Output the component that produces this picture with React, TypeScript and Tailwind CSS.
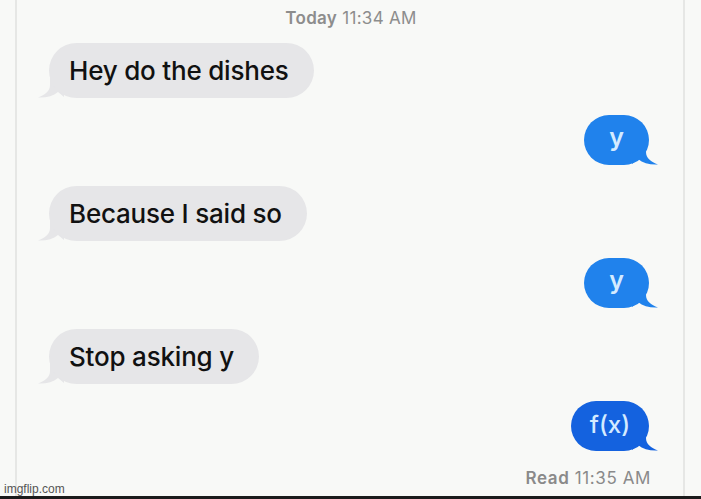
import React from "react";

type Msg = { from: "them" | "me"; text: string; dark?: boolean };

const messages: Msg[] = [
  { from: "them", text: "Hey do the dishes" },
  { from: "me", text: "y" },
  { from: "them", text: "Because I said so" },
  { from: "me", text: "y" },
  { from: "them", text: "Stop asking y" },
  { from: "me", text: "f(x)", dark: true },
];

function Tail({ color, flip }: { color: string; flip?: boolean }) {
  return (
    <svg
      width="26"
      height="22"
      viewBox="0 0 26 22"
      className={
        flip
          ? "absolute -right-[9px] bottom-0 -scale-x-100"
          : "absolute -left-[11px] bottom-0"
      }
    >
      <path
        d="M12 0 L12 9 C12 15 7 19 0 21.5 C8 22 15 20 20 16 L26 21 L26 0 Z"
        fill={color}
      />
    </svg>
  );
}

function Bubble({ msg, first }: { msg: Msg; first: boolean }) {
  if (msg.from === "them") {
    return (
      <div className={first ? "flex justify-start pl-[32px]" : "flex justify-start pl-[32px] mt-[21px]"}>
        <div className="relative">
          <Tail color="#e6e6e8" />
          <div className="relative h-[55px] rounded-[28px] bg-[#e6e6e8] pl-[20px] pr-[25px] flex items-center text-[26px] font-medium text-[#111] tracking-[-0.2px]">
            {msg.text}
          </div>
        </div>
      </div>
    );
  }
  const bg = msg.dark ? "#1462df" : "#2082ec";
  return (
    <div className="flex justify-end pr-[34px] mt-[17px]">
      <div className="relative">
        <Tail color={bg} flip />
        <div
          className={
            msg.dark
              ? "relative h-[50px] rounded-[25px] bg-[#1462df] px-[19px] flex items-center text-[24px] font-medium text-[#d4ebff] pb-[2px]"
              : "relative h-[50px] w-[65px] rounded-[25px] bg-[#2082ec] flex items-center justify-center text-[25px] font-semibold text-[#d4ebff] pb-[4px]"
          }
        >
          {msg.text}
        </div>
      </div>
    </div>
  );
}

export default function App() {
  return (
    <div
      className="relative w-[701px] h-[499px] bg-[#f8f9f7] flex flex-col overflow-hidden"
      style={{ fontFamily: "Inter, 'Liberation Sans', sans-serif" }}
    >
      <div className="flex-1 ml-[15px] w-[670px] border-x-2 border-[#e6e7e5] flex flex-col pt-[7px]">
        <div className="text-center text-[17px] text-[#8d8d8d] leading-[22px] pl-[2px] tracking-[0.3px]">
          <span className="font-semibold">Today</span> 11:34 AM
        </div>
        <div className="flex flex-col mt-[14px]">
          {messages.map((m, i) => (
            <Bubble key={i} msg={m} first={i === 0} />
          ))}
        </div>
        <div className="text-right pr-[32px] mt-[16px] text-[17px] text-[#8a8a8a] leading-[22px] tracking-[0.6px]">
          <span className="font-semibold">Read</span> 11:35 AM
        </div>
      </div>
      <div className="h-[3px] bg-[#1b1b1b]" />
      <div
        className="absolute left-[4px] bottom-[3px] text-[12px] leading-[14px] text-[#555]"
        style={{ fontFamily: "'Liberation Sans', Arial, sans-serif" }}
      >
        imgflip.com
      </div>
    </div>
  );
}
